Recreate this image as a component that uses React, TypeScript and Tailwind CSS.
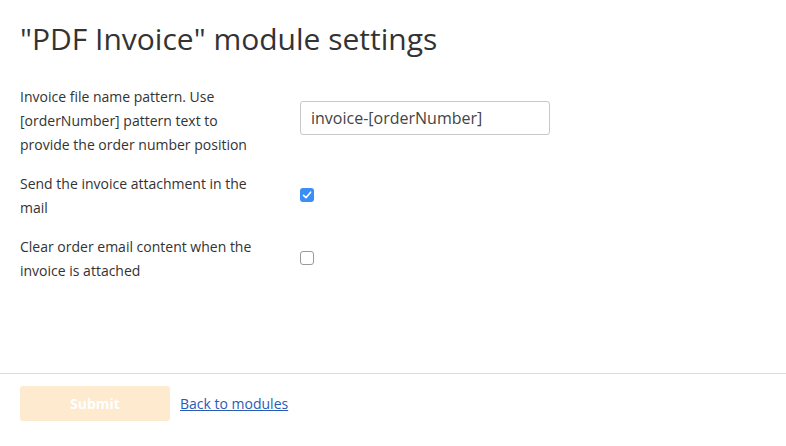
function Check({ checked }: { checked: boolean }) {
  return checked ? (
    <span className="flex h-[14px] w-[14px] items-center justify-center rounded-[3px] bg-[#3a8ef6]">
      <svg viewBox="0 0 14 14" className="h-[14px] w-[14px]" fill="none">
        <path d="M3.5 7.3 L6 9.7 L10.6 4.2" stroke="#fff" strokeWidth="1.6" strokeLinecap="round" strokeLinejoin="round" />
      </svg>
    </span>
  ) : (
    <span className="block h-[14px] w-[14px] rounded-[3px] border border-[#9a9a9a] bg-white" />
  )
}

export default function App() {
  return (
    <div className="h-[446px] w-[786px] bg-white text-[#333] [font-family:'Open_Sans',sans-serif]">
      <div className="h-[373px] px-5 pt-[19px]">
        <h1 className="text-[30px] leading-[40px] font-normal">"PDF Invoice" module settings</h1>
        <div className="mt-[26px] flex flex-col gap-[15px] text-[14px] leading-[24px]">
          <div className="flex items-center">
            <label className="w-[280px] shrink-0 pr-[40px]">
              Invoice file name pattern. Use [orderNumber] pattern text to provide the order number position
            </label>
            <input
              defaultValue="invoice-[orderNumber]"
              className="-mt-[6px] h-[34px] w-[250px] rounded-[3px] border border-[#c8c8c8] px-[10px] text-[16px] text-[#444] outline-none"
            />
          </div>
          <div className="flex items-center">
            <label className="w-[280px] shrink-0 pr-[40px]">Send the invoice attachment in the mail</label>
            <span className="-mt-[3px]">
              <Check checked />
            </span>
          </div>
          <div className="flex items-center">
            <label className="w-[280px] shrink-0 pr-[40px]">Clear order email content when the invoice is attached</label>
            <span className="-mt-[3px]">
              <Check checked={false} />
            </span>
          </div>
        </div>
      </div>
      <div className="flex items-center border-t border-[#dcdcdc] px-5 pt-[12px]">
        <button className="h-[35px] w-[150px] rounded-[3px] bg-[#feeacf] text-[14px] font-bold text-white">
          Submit
        </button>
        <a href="#" className="ml-[10px] text-[14px] text-[#2a5bb5] underline">
          Back to modules
        </a>
      </div>
    </div>
  )
}
